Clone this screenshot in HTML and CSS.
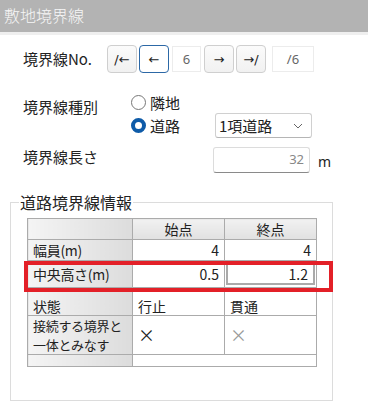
FILE: index.html
```html
<!DOCTYPE html>
<html lang="ja">
<head>
  <meta charset="UTF-8" />
  <meta name="viewport" content="width=device-width, initial-scale=1.0" />
  <title>敷地境界線</title>
  <link rel="stylesheet" href="styles.css">
</head>
<body>
  <div class="page">
    <div class="title-bar">敷地境界線</div>

    <div class="row row-nav">
      <div class="label label-nav">境界線No.</div>
      <div class="nav-group">
        <button class="nav-btn">/←</button>
        <button class="nav-btn active">←</button>
        <div class="num-box">6</div>
        <button class="nav-btn">→</button>
        <button class="nav-btn">→/</button>
        <div class="num-box total">/6</div>
      </div>
    </div>

    <div class="row row-kind">
      <div class="label label-kind">境界線種別</div>
      <div class="radio-group">
        <div class="radio-line">
          <span class="radio"></span>隣地
        </div>
        <div class="radio-line second">
          <span class="radio checked"></span>道路
          <div class="select">
            <span>1項道路</span>
            <svg width="10" height="6" viewBox="0 0 10 6"><path d="M1 1 L5 5 L9 1" fill="none" stroke="#666" stroke-width="1"/></svg>
          </div>
        </div>
      </div>
    </div>

    <div class="row row-length">
      <div class="label label-length">境界線長さ</div>
      <div class="text-input">32</div>
      <span class="unit">m</span>
    </div>

    <fieldset class="road-info">
      <legend>道路境界線情報</legend>
      <table class="grid">
        <tr class="head">
          <th class="side"></th>
          <th>始点</th>
          <th>終点</th>
        </tr>
        <tr class="r-width">
          <td class="side">幅員(m)</td>
          <td class="num">4</td>
          <td class="num">4</td>
        </tr>
        <tr class="r-height">
          <td class="side">中央高さ(m)</td>
          <td class="num">0.5</td>
          <td class="num editing"><div class="edit-box">1.2</div></td>
        </tr>
        <tr class="r-state">
          <td class="side">状態</td>
          <td>行止</td>
          <td>貫通</td>
        </tr>
        <tr class="r-join">
          <td class="side"><div class="two-line">接続する境界と</div><div class="two-line">一体とみなす</div></td>
          <td class="mark">×</td>
          <td class="mark faint">×</td>
        </tr>
        <tr class="r-empty">
          <td class="side"></td>
          <td colspan="2"></td>
        </tr>
      </table>
    </fieldset>

    <div class="highlight"></div>
  </div>
</body>
</html>
```

FILE: styles.css
```css
body {
  margin: 0;
  background: #fff;
  color: #222;
  font-family: "Noto Sans", "Noto Sans CJK JP", sans-serif;
  font-size: 15px;
}
.page {
  position: relative;
  width: 368px;
  height: 411px;
  overflow: hidden;
}
.title-bar {
  height: 32px;
  line-height: 31px;
  background: #b3b3b3;
  border-bottom: 3px solid #efefef;
  color: #f7f7f7;
  padding-left: 4px;
  font-size: 16px;
  font-family: "Noto Sans CJK JP", sans-serif;
  font-weight: 300;
}
.row {
  display: flex;
  padding-left: 23px;
}
.label {
  font-family: "Noto Sans CJK JP", sans-serif;
  line-height: 20px;
  flex-shrink: 0;
}
.row-nav {
  margin-top: 10px;
  align-items: center;
  height: 28px;
}
.label-nav { width: 84px; }
.nav-group {
  display: flex;
  align-items: center;
  gap: 2px;
}
.nav-btn {
  width: 30px;
  height: 28px;
  padding: 0;
  border: 1px solid #cfcfcf;
  border-radius: 4px;
  background: linear-gradient(#fbfbfb, #f1f1f1);
  font-family: "DejaVu Sans", sans-serif;
  font-size: 13px;
  color: #222;
}
.nav-btn.active {
  border-color: #2c68a6;
  background: #fff;
}
.num-box {
  width: 29px;
  height: 26px;
  line-height: 24px;
  border: 1px solid #ececec;
  text-align: center;
  font-size: 13px;
  color: #666;
  box-sizing: border-box;
  margin: 0 1px;
}
.num-box.total {
  width: 42px;
  margin-left: 4px;
}
.row-kind {
  margin-top: 19px;
}
.label-kind {
  width: 108px;
  padding-top: 5px;
}
.radio-group {
  display: flex;
  flex-direction: column;
}
.radio-line {
  display: flex;
  align-items: center;
  height: 21px;
  font-family: "Noto Sans CJK JP", sans-serif;
  font-size: 15px;
}
.radio-line.second {
  height: 25px;
}
.radio {
  width: 13px;
  height: 13px;
  border: 1px solid #777;
  border-radius: 50%;
  margin-right: 4px;
  background: #fff;
}
.radio.checked {
  width: 7px;
  height: 7px;
  border: 4px solid #0e5ba8;
  background: #fff;
}
.select {
  width: 97px;
  height: 25px;
  box-sizing: border-box;
  margin-left: 35px;
  border: 1px solid #d0d0d0;
  border-bottom-color: #b5b5b5;
  border-radius: 3px;
  display: flex;
  align-items: center;
  justify-content: space-between;
  padding: 0 8px 0 3px;
  font-size: 15px;
}
.row-length {
  margin-top: 9px;
  align-items: flex-start;
}
.label-length { width: 190px; }
.text-input {
  width: 97px;
  height: 26px;
  box-sizing: border-box;
  border: 1px solid #dcdcdc;
  border-bottom-color: #8a8a8a;
  border-radius: 3px;
  text-align: right;
  padding-right: 5px;
  line-height: 22px;
  color: #888;
  font-size: 13px;
}
.unit {
  margin-left: 8px;
  margin-top: 5px;
  font-size: 14px;
}
.road-info {
  margin: 19px 0 0 10px;
  width: 323px;
  box-sizing: border-box;
  border: 1px solid #dcdcdc;
  padding: 0 0 33px 16px;
}
.road-info legend {
  margin-left: -8px;
  padding: 0 1px;
  font-family: "Noto Sans CJK JP", sans-serif;
  font-size: 16px;
  line-height: 20px;
}
.grid {
  margin-top: 6px;
  border-collapse: collapse;
  table-layout: fixed;
  width: 290px;
  font-family: "Noto Sans CJK JP", sans-serif;
  font-size: 14px;
}
.grid th, .grid td {
  border: 1px solid #ababab;
  padding: 0 5px;
  line-height: 18px;
  white-space: nowrap;
}
.grid th {
  background: linear-gradient(#f1f1f1, #e1e1e1);
  font-weight: normal;
  height: 20px;
}
.grid th.side {
  width: 94px;
}
.grid .side {
  background: linear-gradient(90deg, #f4f4f4, #dcdcdc);
  text-align: left;
  letter-spacing: -0.3px;
}
.grid .num { text-align: right; }
.r-width td { height: 20px; }
.r-height td { height: 24px; }
.r-state td { height: 27px; vertical-align: bottom; }
.r-join td { height: 38px; }
.two-line {
  font-size: 13px;
  line-height: 19px;
}
.r-empty td { height: 11px; }
.mark { font-size: 17px; }
.mark.faint { color: #999; }
.grid td.editing { padding: 1px; }
.edit-box {
  border: 2px solid #aaa;
  border-top-color: #999;
  text-align: right;
  padding-right: 5px;
  height: 18px;
}
.highlight {
  position: absolute;
  left: 24px;
  top: 261px;
  width: 301px;
  height: 23px;
  border: 4px solid #e32028;
}
```
